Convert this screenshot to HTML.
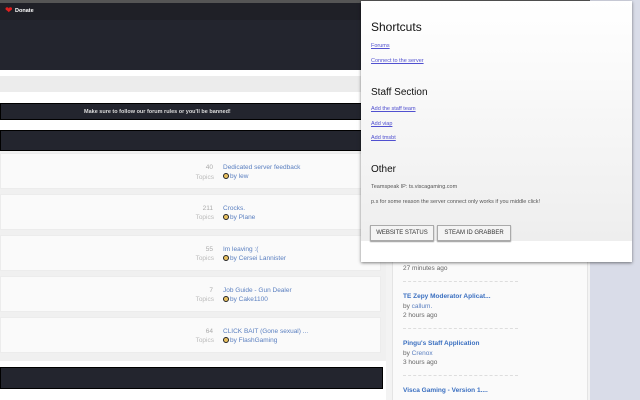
<!DOCTYPE html>
<html style="overflow:hidden"><head><style>
*{margin:0;padding:0;box-sizing:border-box}
html,body{width:640px;height:400px;overflow:hidden}
body{background:#f3f3f3;font-family:"Liberation Sans",sans-serif;position:relative}
.a{position:absolute}
.dark{background:#23252e}
.card{position:absolute;left:0;width:381px;height:36px;background:#fafafa;border:1px solid #ececec}
.num{position:absolute;left:160px;width:52px;text-align:right;font-size:6.5px;color:#aaa}
.tp{position:absolute;left:160px;width:53px;text-align:right;font-size:6.5px;color:#bbb}
.tt{position:absolute;left:222px;font-size:6.5px;color:#5a7fc0}
.by{position:absolute;left:222px;font-size:6.5px;color:#5a7fc0}
.by i{display:inline-block;width:6px;height:6px;border:1px solid #222;border-radius:50%;vertical-align:-1px;margin-right:1px;background:#e8c060}
.sb{font-size:6.5px;position:absolute;left:403px;white-space:nowrap}
.dash{position:absolute;left:403px;width:115px;border-top:1px dashed #ddd}
.pop a{color:#5050d0;text-decoration:underline;font-size:5.5px;position:absolute;left:10px}
.pop h2{font-weight:normal;position:absolute;left:10px;color:#111}
.pop p{font-size:5.5px;color:#555;position:absolute;left:10px}
.btn{position:absolute;top:225px;height:16px;border:1px solid #aaa;background:#f4f4f4;font-size:6px;color:#333;text-align:center;line-height:14px;box-shadow:0 1px 1px #999}
</style></head><body>
<div class="a" style="left:0;top:0;width:640px;height:3px;background:#555"></div>
<div class="a dark" style="left:0;top:3px;width:640px;height:17px;background:#1f2027"></div>
<div class="a" style="left:5px;top:5px;color:#e02020;font-size:9px">&#10084;</div>
<div class="a" style="left:15px;top:8px;color:#fff;font-size:5.5px;font-weight:bold">Donate</div>
<div class="a dark" style="left:0;top:20px;width:640px;height:50px"></div>
<div class="a" style="left:0;top:70px;width:640px;height:35px;background:#fff"></div>
<div class="a" style="left:0;top:76px;width:640px;height:16px;background:#ececec"></div>
<div class="a dark" style="left:0;top:103px;width:400px;height:17px;border:1px solid #000"></div>
<div class="a" style="left:84px;top:109px;color:#ddd;font-size:5.5px;font-weight:bold">Make sure to follow our forum rules or you'll be banned!</div>
<div class="a" style="left:0;top:120px;width:400px;height:10px;background:#fff"></div>
<div class="a dark" style="left:0;top:130px;width:400px;height:21px;border:1px solid #000"></div>
<div class="a" style="left:0;top:151px;width:386px;height:210px;background:#f0f0f0"></div>
<div class="card" style="top:153px"><div class="num" style="top:10px">40</div><div class="tp" style="top:20px">Topics</div><div class="tt" style="top:10px">Dedicated server feedback</div><div class="by" style="top:19px"><i></i>by lew</div></div>
<div class="card" style="top:194px"><div class="num" style="top:10px">211</div><div class="tp" style="top:19px">Topics</div><div class="tt" style="top:10px">Crocks.</div><div class="by" style="top:19px"><i></i>by Plane</div></div>
<div class="card" style="top:235px"><div class="num" style="top:10px">55</div><div class="tp" style="top:19px">Topics</div><div class="tt" style="top:10px">Im leaving :(</div><div class="by" style="top:19px"><i></i>by Cersei Lannister</div></div>
<div class="card" style="top:276px"><div class="num" style="top:10px">7</div><div class="tp" style="top:19px">Topics</div><div class="tt" style="top:10px">Job Guide - Gun Dealer</div><div class="by" style="top:19px"><i></i>by Cake1100</div></div>
<div class="card" style="top:317px"><div class="num" style="top:10px">64</div><div class="tp" style="top:19px">Topics</div><div class="tt" style="top:10px">CLICK BAIT (Gone sexual) ...</div><div class="by" style="top:19px"><i></i>by FlashGaming</div></div>
<div class="a" style="left:0;top:361px;width:386px;height:39px;background:#fff"></div>
<div class="a dark" style="left:0;top:367px;width:383px;height:22px;border:1px solid #000"></div>
<div class="a" style="left:590px;top:0;width:50px;height:400px;background:#d9dce8"></div>
<div class="a" style="left:392px;top:150px;width:196px;height:250px;background:#fafafa;border:1px solid #e4e4e4;border-bottom:none"></div>
<div class="sb" style="top:265px;color:#666">27 minutes ago</div>
<div class="dash" style="top:281px"></div>
<div class="sb" style="top:293px;color:#3a6fc0;font-weight:bold">TE Zepy Moderator Aplicat...</div>
<div class="sb" style="top:303px;color:#666">by <span style="color:#5a7fc0">callum.</span></div>
<div class="sb" style="top:312px;color:#666">2 hours ago</div>
<div class="dash" style="top:328px"></div>
<div class="sb" style="top:340px;color:#3a6fc0;font-weight:bold">Pingu's Staff Application</div>
<div class="sb" style="top:350px;color:#666">by <span style="color:#5a7fc0">Crenox</span></div>
<div class="sb" style="top:359px;color:#666">3 hours ago</div>
<div class="dash" style="top:375px"></div>
<div class="sb" style="top:387px;color:#3a6fc0;font-weight:bold">Visca Gaming - Version 1....</div>
<div class="a pop" style="left:361px;top:1px;width:271px;height:261px;background:linear-gradient(#fff,#eee 240px,#fff 240px);box-shadow:0 1px 3px rgba(0,0,0,.5)">
<h2 style="top:19px;font-size:12px">Shortcuts</h2>
<a style="top:42px">Forums</a>
<a style="top:57px">Connect to the server</a>
<h2 style="top:86px;font-size:10px">Staff Section</h2>
<a style="top:105px">Add the staff team</a>
<a style="top:120px">Add viap</a>
<a style="top:134px">Add tmsbt</a>
<h2 style="top:163px;font-size:10px">Other</h2>
<p style="top:183px">Teamspeak IP: ts.viscagaming.com</p>
<p style="top:198px">p.s for some reason the server connect only works if you middle click!</p>
<div class="btn" style="left:9px;width:64px;top:224px">WEBSITE STATUS</div>
<div class="btn" style="left:76px;width:74px;top:224px">STEAM ID GRABBER</div>
</div>
</body></html>
